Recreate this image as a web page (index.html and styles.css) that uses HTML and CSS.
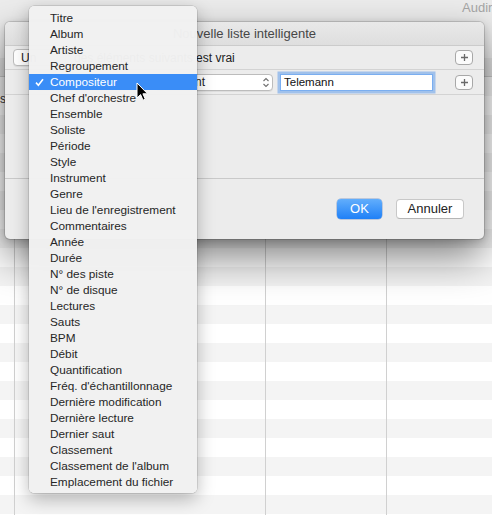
FILE: index.html
```html
<!DOCTYPE html>
<html lang="fr">
<head>
<meta charset="utf-8">
<title>Nouvelle liste intelligente</title>
<link rel="stylesheet" href="styles.css">
</head>
<body>
<div class="screen">
  <div class="window">
    <div class="toolbar">Audir</div>
    <div class="thead"></div>
    <div class="tbody">
      <div class="col c1"><div class="lbl">Genres</div></div>
      <div class="col c2"></div>
      <div class="col c3"></div>
      <div class="col c4"></div>
    </div>
  </div>

  <div class="sheet">
    <div class="titlebar">Nouvelle liste intelligente</div>
    <div class="rule r1">
      <div class="popup p-un"><span class="ptext">Un</span></div>
      <span class="rtext">des éléments suivants est vrai</span>
      <div class="plus"><svg width="9" height="9" viewBox="0 0 9 9"><path d="M4.5 1v7M1 4.5h7" stroke="#6a6a6a" stroke-width="1.3" fill="none"/></svg></div>
    </div>
    <div class="rule r2">
      <div class="popup p-field"><span class="ptext">Compositeur</span></div>
      <div class="popup p-op">
        <span class="ptext">contient</span>
        <svg class="arrows" width="10" height="13" viewBox="0 0 10 13"><path d="M2.5 5L5 2.5L7.5 5M2.5 8L5 10.5L7.5 8" stroke="#707070" stroke-width="1.1" fill="none"/></svg>
      </div>
      <div class="field">Telemann</div>
      <div class="plus"><svg width="9" height="9" viewBox="0 0 9 9"><path d="M4.5 1v7M1 4.5h7" stroke="#6a6a6a" stroke-width="1.3" fill="none"/></svg></div>
    </div>
    <div class="space"></div>
    <div class="footer">
      <div class="btn ok">OK</div>
      <div class="btn cancel">Annuler</div>
    </div>
  </div>

  <div class="menu">
    <div class="item"><span class="mark"></span>Titre</div>
    <div class="item"><span class="mark"></span>Album</div>
    <div class="item"><span class="mark"></span>Artiste</div>
    <div class="item"><span class="mark"></span>Regroupement</div>
    <div class="item sel"><span class="mark"><svg width="9" height="9" viewBox="0 0 9 9"><path d="M1 4.6L3.4 7.2L8 1.2" stroke="#fff" stroke-width="1.6" fill="none"/></svg></span>Compositeur</div>
    <div class="item"><span class="mark"></span>Chef d'orchestre</div>
    <div class="item"><span class="mark"></span>Ensemble</div>
    <div class="item"><span class="mark"></span>Soliste</div>
    <div class="item"><span class="mark"></span>Période</div>
    <div class="item"><span class="mark"></span>Style</div>
    <div class="item"><span class="mark"></span>Instrument</div>
    <div class="item"><span class="mark"></span>Genre</div>
    <div class="item"><span class="mark"></span>Lieu de l'enregistrement</div>
    <div class="item"><span class="mark"></span>Commentaires</div>
    <div class="item"><span class="mark"></span>Année</div>
    <div class="item"><span class="mark"></span>Durée</div>
    <div class="item"><span class="mark"></span>N° des piste</div>
    <div class="item"><span class="mark"></span>N° de disque</div>
    <div class="item"><span class="mark"></span>Lectures</div>
    <div class="item"><span class="mark"></span>Sauts</div>
    <div class="item"><span class="mark"></span>BPM</div>
    <div class="item"><span class="mark"></span>Débit</div>
    <div class="item"><span class="mark"></span>Quantification</div>
    <div class="item"><span class="mark"></span>Fréq. d'échantillonnage</div>
    <div class="item"><span class="mark"></span>Dernière modification</div>
    <div class="item"><span class="mark"></span>Dernière lecture</div>
    <div class="item"><span class="mark"></span>Dernier saut</div>
    <div class="item"><span class="mark"></span>Classement</div>
    <div class="item"><span class="mark"></span>Classement de l'album</div>
    <div class="item"><span class="mark"></span>Emplacement du fichier</div>
  </div>

  <svg class="cursor" width="13" height="20" viewBox="0 0 13 20"><path d="M1 1L1 16L4.6 12.6L7 18.2L9.3 17.2L6.9 11.8L11.6 11.8Z" fill="#000" stroke="#fff" stroke-width="1" stroke-linejoin="round"/></svg>
</div>
</body>
</html>
```

FILE: styles.css
```css
* { box-sizing: border-box; margin: 0; padding: 0; }
html, body { width: 492px; height: 515px; overflow: hidden; }
body { font-family: "Liberation Sans", Arial, sans-serif; background: #fff; }

.screen { position: relative; width: 492px; height: 515px; overflow: hidden; }

/* background window */
.window { display: flex; flex-direction: column; height: 100%; }
.toolbar {
  height: 58px; flex: none; background: #ececec;
  padding: 1px 0 0 462px; font-size: 13px; line-height: 14px;
  color: #a6a6a6; white-space: nowrap; overflow: hidden;
}
.thead { height: 19px; flex: none; background: #e1e1e1; border-bottom: 1px solid #c8c8c8; }
.tbody {
  flex: 1; display: flex;
  background: repeating-linear-gradient(#f4f4f4 0 19px, #ffffff 19px 38px);
}
.col { border-right: 1px solid #d0d0d0; flex: none; }
.c1 { width: 15px; }
.c2 { width: 251px; }
.c3 { width: 121px; }
.c4 { flex: 1; border-right: 0; }
.lbl {
  display: flex; justify-content: flex-end; white-space: nowrap;
  margin-top: 15px; padding-right: 8px; height: 15px; line-height: 15px;
  font-size: 12px; color: #333; overflow: visible;
}

/* sheet dialog */
.sheet {
  position: absolute; left: 5px; top: 22px; width: 479px; height: 217px;
  background: #ececec; border-radius: 5px;
  box-shadow: 0 0 0 1px rgba(0,0,0,0.13), 0 18px 40px rgba(0,0,0,0.5), 0 2px 8px rgba(0,0,0,0.18);
  display: flex; flex-direction: column; overflow: hidden;
  color: #222; font-size: 12px;
}
.titlebar {
  height: 24px; flex: none; border-bottom: 1px solid #cbcbcb;
  background: linear-gradient(#e9e9e9, #dedede);
  text-align: center; font-size: 13px; line-height: 23px; color: #474747;
}
.rule {
  display: flex; align-items: center; flex: none;
  border-bottom: 1px solid #d3d3d3; padding: 0 11px 0 8px; gap: 8px;
}
.r1 { height: 24px; }
.r2 { height: 25px; padding-left: 31px; }
.popup {
  height: 17px; background: #fff; border: 1px solid #bcbcbc; border-radius: 4px;
  box-shadow: 0 1px 0 rgba(0,0,0,0.06);
  display: flex; align-items: center; justify-content: space-between;
  font-size: 12px; color: #222; flex: none;
}
.ptext { padding-left: 7px; }
.p-un { width: 53px; }
.p-field { width: 111px; }
.p-op { width: 118px; }
.arrows { margin-right: 1px; }
.rtext { white-space: nowrap; }
.field {
  width: 153px; height: 17px; margin-left: -1px; background: #fff;
  border: 1px solid #7aaef0; padding-left: 3px;
  box-shadow: 0 0 0 2.5px rgba(120,170,235,0.65);
  font-size: 11.5px; line-height: 15px; color: #111; flex: none;
}
.plus {
  margin-left: auto; width: 18px; height: 15px; flex: none;
  border: 1px solid #a8a8a8; border-radius: 4px; background: #fbfbfb;
  display: flex; align-items: center; justify-content: center;
}
.space { flex: 1; border-bottom: 1px solid #c9c9c9; }
.footer {
  height: 60px; flex: none; display: flex; justify-content: flex-end;
  align-items: center; gap: 14px; padding-right: 20px;
}
.btn {
  height: 20px; border-radius: 4px; font-size: 13px; line-height: 20px;
  text-align: center; flex: none;
}
.ok {
  width: 45px; color: #fff;
  background: linear-gradient(#62aefc, #1f80f7);
  box-shadow: 0 0 0 0.5px rgba(0,60,160,0.4);
}
.cancel {
  width: 68px; color: #222; background: #fff;
  border: 1px solid #c8c8c8; border-bottom-color: #b5b5b5; line-height: 18px;
}

/* popup menu */
.menu {
  position: absolute; left: 29px; top: 6px; width: 168px;
  padding: 4px 0 3px; background: rgba(241,241,241,0.98); border-radius: 5px;
  box-shadow: 0 0 0 0.5px rgba(0,0,0,0.2), 0 6px 18px rgba(0,0,0,0.28);
  font-size: 11.8px; color: #262626;
}
.item { height: 16px; line-height: 16px; display: flex; align-items: center; white-space: nowrap; }
.mark { width: 21px; flex: none; padding-left: 6px; display: flex; align-items: center; }
.item.sel { background: #3a8df7; color: #fff; }

.cursor { position: absolute; left: 136px; top: 82px; }
```
